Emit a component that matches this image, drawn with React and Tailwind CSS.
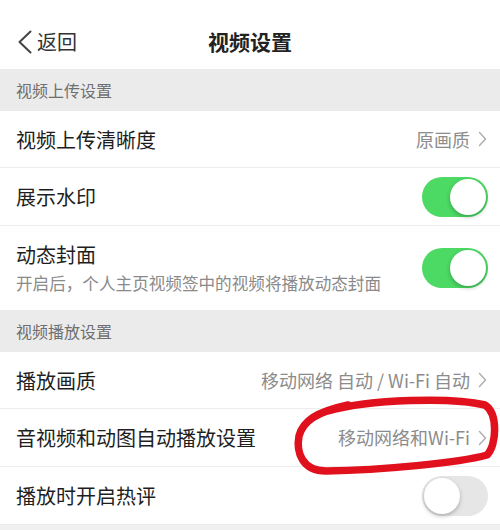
const Chevron = () => (
  <svg width="9" height="16" viewBox="0 0 9 16" className="shrink-0">
    <path d="M1.5 1.5 L7.5 8 L1.5 14.5" fill="none" stroke="#adadad" strokeWidth="1.4" strokeLinecap="round" strokeLinejoin="round" />
  </svg>
);

const Toggle = ({ on }) => (
  <div
    className={`w-[66px] h-[40px] rounded-full p-[2px] flex items-center ${
      on ? 'bg-[#4cd964] justify-end' : 'bg-[#e6e6e6] justify-start'
    }`}
  >
    <div className="w-[36px] h-[36px] rounded-full bg-white shadow-[0_2px_4px_rgba(0,0,0,0.25)]"></div>
  </div>
);

const SectionHeader = ({ children }) => (
  <div className="h-[42px] bg-[#ebebeb] flex items-center px-4 text-[16px] text-[#6f6f6f]">
    {children}
  </div>
);

const Row = ({ label, value, toggle, sub, height = 'h-[57px]', border = true }) => (
  <div className={`${height} flex items-center pl-4 pr-[12px] bg-white ${border ? 'border-b border-[#ececec]' : ''}`}>
    <div className="flex-1 min-w-0">
      <div className="text-[20px] text-[#1e1e1e] leading-tight">{label}</div>
      {sub && <div className="text-[16.6px] text-[#8a8a8a] mt-[6px] leading-tight">{sub}</div>}
    </div>
    {value && (
      <div className="flex items-center gap-[8px] text-[18px] text-[#8c8c8c] whitespace-nowrap pr-[1px]">
        <span>{value}</span>
        <Chevron />
      </div>
    )}
    {toggle !== undefined && <Toggle on={toggle} />}
  </div>
);

export default function App() {
  return (
    <div
      className="relative w-[500px] h-[530px] overflow-hidden bg-[#f0f0f0]"
      style={{ fontFamily: '"Noto Sans CJK SC", "Noto Sans", sans-serif' }}
    >
      {/* Header */}
      <div className="h-[69px] bg-white flex items-center relative pl-[17px]">
        <div className="flex items-center gap-[4px] text-[#333] text-[20px] mt-[14px]">
          <svg width="16" height="24" viewBox="0 0 16 24">
            <path d="M13.5 1.5 L2.5 12 L13.5 22.5" fill="none" stroke="#444" strokeWidth="2" strokeLinecap="round" strokeLinejoin="round" />
          </svg>
          <span>返回</span>
        </div>
        <div className="absolute inset-x-0 top-[14px] bottom-0 flex items-center justify-center pointer-events-none">
          <span className="text-[21px] font-bold text-[#222]">视频设置</span>
        </div>
      </div>

      <SectionHeader>视频上传设置</SectionHeader>
      <Row label="视频上传清晰度" value="原画质" />
      <Row label="展示水印" toggle={true} height="h-[58px]" />
      <Row
        label="动态封面"
        sub="开启后，个人主页视频签中的视频将播放动态封面"
        toggle={true}
        height="h-[84px]"
        border={false}
      />

      <SectionHeader>视频播放设置</SectionHeader>
      <Row label="播放画质" value="移动网络 自动 / Wi-Fi 自动" />
      <Row label="音视频和动图自动播放设置" value="移动网络和Wi-Fi" height="h-[58px]" />
      <Row label="播放时开启热评" toggle={false} height="h-[58px]" />

      {/* red hand-drawn annotation */}
      <svg className="absolute left-0 top-0 pointer-events-none" width="500" height="530" viewBox="0 0 500 530">
        <path
          d="M 328 411 C 370 399, 452 397, 485 405 C 498 413, 497 445, 487 455 C 458 463, 382 470, 326 471 C 302 471, 296 452, 299 436 C 303 421, 316 412, 348 405"
          fill="none"
          stroke="#e0101c"
          strokeWidth="7.5"
          strokeLinecap="round"
        />
      </svg>
    </div>
  );
}
